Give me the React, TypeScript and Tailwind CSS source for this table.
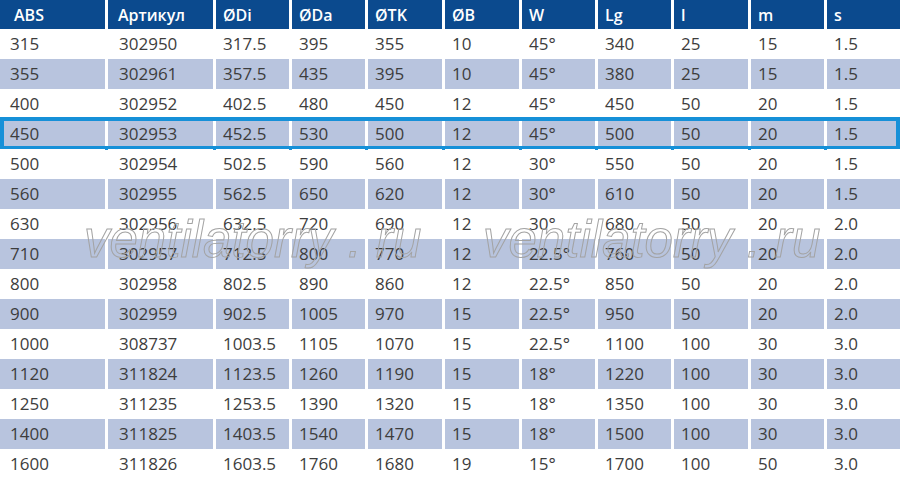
const HEAD = ["ABS", "Артикул", "ØDi", "ØDa", "ØTK", "ØB", "W", "Lg", "l", "m", "s"]

const ROWS = [
  ["315", "302950", "317.5", "395", "355", "10", "45°", "340", "25", "15", "1.5"],
  ["355", "302961", "357.5", "435", "395", "10", "45°", "380", "25", "15", "1.5"],
  ["400", "302952", "402.5", "480", "450", "12", "45°", "450", "50", "20", "1.5"],
  ["450", "302953", "452.5", "530", "500", "12", "45°", "500", "50", "20", "1.5"],
  ["500", "302954", "502.5", "590", "560", "12", "30°", "550", "50", "20", "1.5"],
  ["560", "302955", "562.5", "650", "620", "12", "30°", "610", "50", "20", "1.5"],
  ["630", "302956", "632.5", "720", "690", "12", "30°", "680", "50", "20", "2.0"],
  ["710", "302957", "712.5", "800", "770", "12", "22.5°", "760", "50", "20", "2.0"],
  ["800", "302958", "802.5", "890", "860", "12", "22.5°", "850", "50", "20", "2.0"],
  ["900", "302959", "902.5", "1005", "970", "15", "22.5°", "950", "50", "20", "2.0"],
  ["1000", "308737", "1003.5", "1105", "1070", "15", "22.5°", "1100", "100", "30", "3.0"],
  ["1120", "311824", "1123.5", "1260", "1190", "15", "18°", "1220", "100", "30", "3.0"],
  ["1250", "311235", "1253.5", "1390", "1320", "15", "18°", "1350", "100", "30", "3.0"],
  ["1400", "311825", "1403.5", "1540", "1470", "15", "18°", "1500", "100", "30", "3.0"],
  ["1600", "311826", "1603.5", "1760", "1680", "19", "15°", "1700", "100", "50", "3.0"],
]

const GRID =
  "grid grid-cols-[105px_105px_73px_73px_74px_74px_73px_73px_74px_73px_73px] gap-x-[3px]"

const HEAD_PAD = ["pl-[14px]", "pl-[10px]"]
const CELL_PAD = ["pl-[10px]", "pl-[11px]"]

function Watermark({ className }: { className: string }) {
  return (
    <div
      className={`pointer-events-none absolute whitespace-pre font-['Liberation_Sans',sans-serif] text-[51px] italic leading-none text-transparent [-webkit-text-stroke:1px_#a3a3a3] ${className}`}
    >
      ventilatorry . ru
    </div>
  )
}

export default function App() {
  return (
    <div className="relative h-[482px] w-[900px] overflow-hidden bg-white font-['Open_Sans',sans-serif]">
      {/* Header */}
      <div className={`${GRID} h-[29px]`}>
        {HEAD.map((h, i) => (
          <div
            key={h}
            className={`flex items-center bg-[#0b4a8e] text-[16px] font-semibold text-white ${HEAD_PAD[i] ?? "pl-[7px]"}`}
          >
            {h}
          </div>
        ))}
      </div>

      {/* Body */}
      {ROWS.map((row, r) => (
        <div key={row[1]} className={`${GRID} relative h-[30px]`}>
          {row.map((v, i) => (
            <div
              key={i}
              className={`flex items-center text-[17px] text-[#3d3d3d] ${r % 2 === 1 ? "bg-[#b8c4de]" : "bg-white"} ${CELL_PAD[i] ?? "pl-[7px]"}`}
            >
              {v}
            </div>
          ))}
          {r === 3 && (
            <div className="pointer-events-none absolute inset-x-0 -top-[2px] -bottom-[1px] border-4 border-[#1690d8]" />
          )}
        </div>
      ))}

      {/* Watermarks */}
      <Watermark className="left-[84px] top-[214px]" />
      <Watermark className="left-[483px] top-[214px]" />
    </div>
  )
}
